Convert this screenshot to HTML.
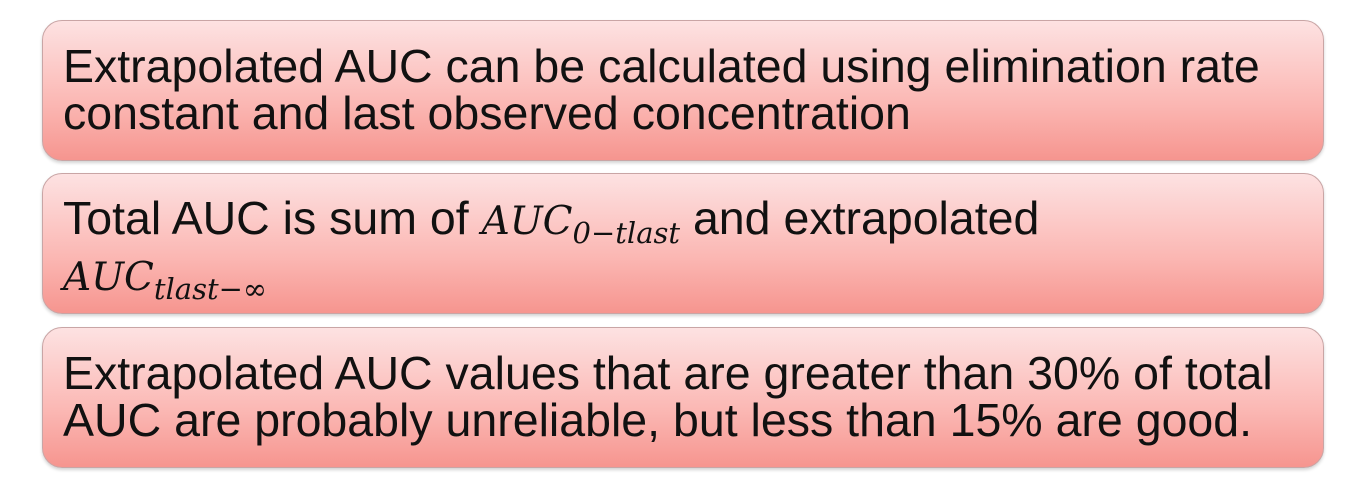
<!DOCTYPE html><html><head><style>
body{margin:0;width:1350px;height:480px;background:#fff;position:relative;overflow:hidden;font-family:"Liberation Sans",Arial,sans-serif}
.b{position:absolute;left:42px;width:1282px;height:141px;border-radius:20px;border:1.5px solid #c9a5a5;box-sizing:border-box;background:linear-gradient(#fde2e2,#fbb7b3 60%,#f6958f);box-shadow:0 2px 3px rgba(0,0,0,.18)}
.t{position:absolute;left:20px;top:22px;font-size:46.5px;line-height:47px;color:#111;white-space:nowrap}
i{font-family:"DejaVu Serif",serif;font-style:italic;font-size:39px}
sub{font-size:29px;vertical-align:-9px;line-height:0}
</style></head><body>
<div class="b" style="top:20px"><div class="t">Extrapolated AUC can be calculated using elimination rate<br>constant and last observed concentration</div></div>
<div class="b" style="top:173px"><div class="t" style="top:18px;line-height:52px">Total AUC is sum of <i>AUC<sub>0−tlast</sub></i> and extrapolated<br><i>AUC<sub>tlast−∞</sub></i></div></div>
<div class="b" style="top:327px"><div class="t">Extrapolated AUC values that are greater than 30% of total<br>AUC are probably unreliable, but less than 15% are good.</div></div>
</body></html>
